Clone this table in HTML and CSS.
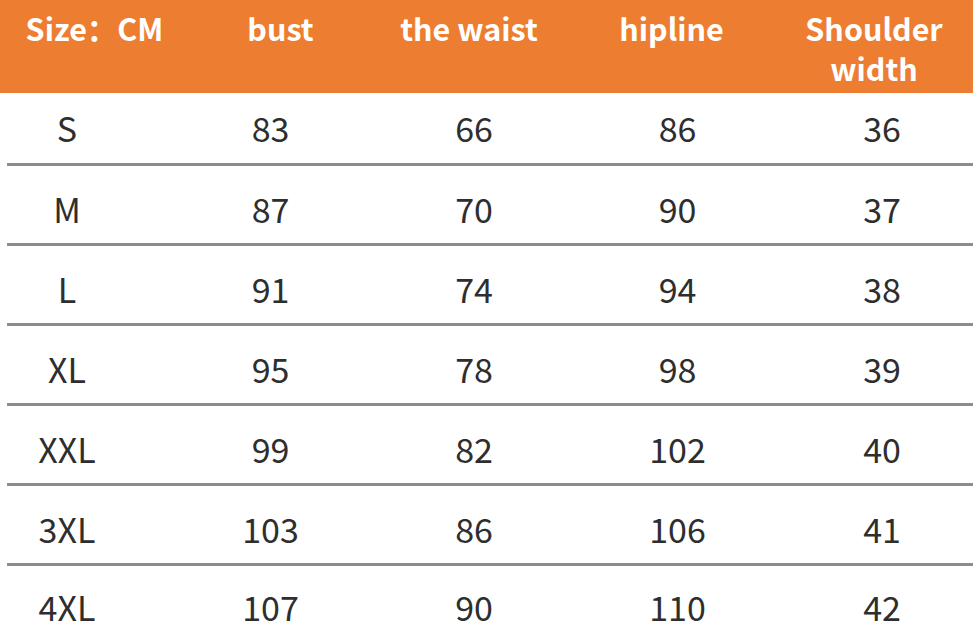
FILE: index.html
```html
<!DOCTYPE html>
<html>
<head>
<meta charset="utf-8">
<link rel="stylesheet" href="styles.css">
</head>
<body>
<div class="chart">
  <div class="head">
    <div class="hc h1">Size：CM</div>
    <div class="hc h2">bust</div>
    <div class="hc h3">the waist</div>
    <div class="hc h4">hipline</div>
    <div class="hc h5">Shoulder<br>width</div>
  </div>
  <div class="row first">
    <div class="c c1">S</div><div class="c c2">83</div><div class="c c3">66</div><div class="c c4">86</div><div class="c c5">36</div>
  </div>
  <div class="row">
    <div class="c c1">M</div><div class="c c2">87</div><div class="c c3">70</div><div class="c c4">90</div><div class="c c5">37</div>
  </div>
  <div class="row">
    <div class="c c1">L</div><div class="c c2">91</div><div class="c c3">74</div><div class="c c4">94</div><div class="c c5">38</div>
  </div>
  <div class="row">
    <div class="c c1">XL</div><div class="c c2">95</div><div class="c c3">78</div><div class="c c4">98</div><div class="c c5">39</div>
  </div>
  <div class="row">
    <div class="c c1">XXL</div><div class="c c2">99</div><div class="c c3">82</div><div class="c c4">102</div><div class="c c5">40</div>
  </div>
  <div class="row">
    <div class="c c1">3XL</div><div class="c c2">103</div><div class="c c3">86</div><div class="c c4">106</div><div class="c c5">41</div>
  </div>
  <div class="row last">
    <div class="c c1">4XL</div><div class="c c2">107</div><div class="c c3">90</div><div class="c c4">110</div><div class="c c5">42</div>
  </div>
</div>
</body>
</html>
```
FILE: styles.css
```css
html, body {
  margin: 0;
  padding: 0;
  background: #ffffff;
}
body {
  width: 973px;
  height: 640px;
  overflow: hidden;
  font-family: "Noto Sans CJK SC", "Noto Sans", sans-serif;
}
.chart {
  display: flex;
  flex-direction: column;
}
.head {
  height: 93px;
  background: #ed7d31;
  display: grid;
  grid-template-columns: 169px 203px 204px 203px 194px;
  color: #ffffff;
  font-weight: bold;
  font-size: 30.5px;
  line-height: 40px;
  box-sizing: border-box;
  padding-top: 8px;
}
.hc {
  text-align: center;
  white-space: nowrap;
}
.h1 { padding-left: 20px; }
.h2 { padding-left: 20px; }
.h3 { padding-right: 10px; }
.h4 { padding-right: 12px; }
.h5 { padding-right: 4px; }

.row {
  display: grid;
  grid-template-columns: 162px 203px 204px 203px 194px;
  margin-left: 7px;
  border-top: 3px solid #8c8c8c;
  height: 80px;
  box-sizing: border-box;
  padding-top: 8px;
  font-size: 34px;
  line-height: 69px;
  color: #2e2e2e;
  align-items: start;
}
.row.first {
  border-top: none;
  height: 70px;
  padding-top: 0;
  line-height: 70px;
}
.row.last {
  height: 78px;
  padding-top: 6px;
}
.c {
  text-align: center;
}
.c1 { padding-right: 42px; }
.c5 { padding-left: 12px; }
```
